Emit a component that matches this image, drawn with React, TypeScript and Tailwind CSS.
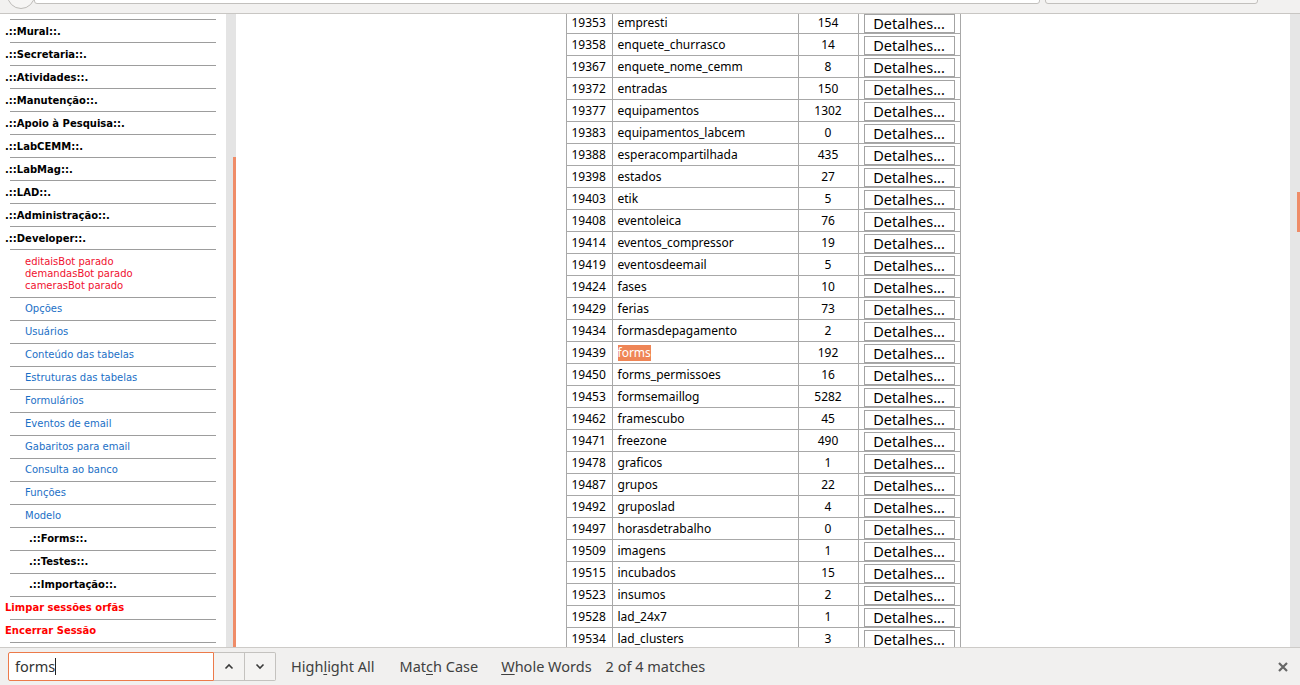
import React from 'react';

const rows: [string, string, string][] = [
  ['19353', 'empresti', '154'],
  ['19358', 'enquete_churrasco', '14'],
  ['19367', 'enquete_nome_cemm', '8'],
  ['19372', 'entradas', '150'],
  ['19377', 'equipamentos', '1302'],
  ['19383', 'equipamentos_labcem', '0'],
  ['19388', 'esperacompartilhada', '435'],
  ['19398', 'estados', '27'],
  ['19403', 'etik', '5'],
  ['19408', 'eventoleica', '76'],
  ['19414', 'eventos_compressor', '19'],
  ['19419', 'eventosdeemail', '5'],
  ['19424', 'fases', '10'],
  ['19429', 'ferias', '73'],
  ['19434', 'formasdepagamento', '2'],
  ['19439', 'forms', '192'],
  ['19450', 'forms_permissoes', '16'],
  ['19453', 'formsemaillog', '5282'],
  ['19462', 'framescubo', '45'],
  ['19471', 'freezone', '490'],
  ['19478', 'graficos', '1'],
  ['19487', 'grupos', '22'],
  ['19492', 'gruposlad', '4'],
  ['19497', 'horasdetrabalho', '0'],
  ['19509', 'imagens', '1'],
  ['19515', 'incubados', '15'],
  ['19523', 'insumos', '2'],
  ['19528', 'lad_24x7', '1'],
  ['19534', 'lad_clusters', '3'],
];

const topMenus = [
  '.::Mural::.',
  '.::Secretaria::.',
  '.::Atividades::.',
  '.::Manutenção::.',
  '.::Apoio à Pesquisa::.',
  '.::LabCEMM::.',
  '.::LabMag::.',
  '.::LAD::.',
  '.::Administração::.',
  '.::Developer::.',
];

const devLinks = [
  'Opções',
  'Usuários',
  'Conteúdo das tabelas',
  'Estruturas das tabelas',
  'Formulários',
  'Eventos de email',
  'Gabaritos para email',
  'Consulta ao banco',
  'Funções',
  'Modelo',
];

const subMenus = ['.::Forms::.', '.::Testes::.', '.::Importação::.'];

function Line() {
  return <div className="ml-[10px] w-[206px] h-px bg-[#9d9d9d]" />;
}

function Sidebar() {
  return (
    <div className="w-[226px] shrink-0 pt-[5px] text-[10px] font-['DejaVu_Sans',Verdana,sans-serif]">
      {topMenus.map((m) => (
        <div key={m}>
          <Line />
          <div className="h-[22px] flex items-center pl-[5px] font-bold text-black">{m}</div>
        </div>
      ))}
      <Line />
      <div className="pl-[25px] pt-[6px] pb-[4.5px] leading-[12px] text-[#f0112f]">
        <div>editaisBot parado</div>
        <div>demandasBot parado</div>
        <div>camerasBot parado</div>
      </div>
      {devLinks.map((l) => (
        <div key={l}>
          <Line />
          <div className="h-[22px] flex items-center pl-[25px] text-[#1b6fc6]">{l}</div>
        </div>
      ))}
      {subMenus.map((m) => (
        <div key={m}>
          <Line />
          <div className="h-[22px] flex items-center pl-[29px] font-bold text-black">{m}</div>
        </div>
      ))}
      <Line />
      <div className="h-[22px] flex items-center pl-[5px] font-bold text-[#ff0000]">Limpar sessões orfãs</div>
      <Line />
      <div className="h-[22px] flex items-center pl-[5px] font-bold text-[#ff0000]">Encerrar Sessão</div>
      <Line />
    </div>
  );
}

function TableView() {
  return (
    <table className="mx-auto mt-[-3px] table-fixed w-[394px] border-collapse font-['Noto_Sans',sans-serif] text-[12px] text-black">
      <colgroup>
        <col className="w-[46px]" />
        <col className="w-[186px]" />
        <col className="w-[60px]" />
        <col className="w-[102px]" />
      </colgroup>
      <tbody>
        {rows.map(([id, name, count]) => (
          <tr key={id}>
            <td className="border border-[#a8a8a8] h-[22px] px-[5px] leading-[21px] whitespace-nowrap">{id}</td>
            <td className="border border-[#a8a8a8] h-[22px] px-[5px] leading-[21px] whitespace-nowrap">
              {name === 'forms' ? (
                <span className="inline-block bg-[#ef8556] text-white leading-[16px]">{name}</span>
              ) : (
                name
              )}
            </td>
            <td className="border border-[#a8a8a8] h-[22px] text-center leading-[21px]">{count}</td>
            <td className="border border-[#a8a8a8] h-[22px] pl-[5px] pr-0 py-0 align-bottom">
              <div className="w-[91px] h-[19px] border border-[#a3a3a3] bg-white flex items-center justify-center text-[14.5px] leading-none text-black">
                Detalhes...
              </div>
            </td>
          </tr>
        ))}
      </tbody>
    </table>
  );
}

function FindBar() {
  return (
    <div className="h-[38px] shrink-0 bg-[#f1f0ef] border-t border-[#cdcbc8] flex items-center font-['Noto_Sans',sans-serif] text-[14.5px] text-[#404040]">
      <div className="ml-[8px] flex items-center h-[29px]">
        <div className="w-[206px] h-[29px] border border-[#ec7a4a] bg-white rounded-l-[2px] flex items-center pl-[6px] text-[#333]">
          forms<span className="inline-block w-px h-[17px] bg-[#222]" />
        </div>
        <div className="w-[31px] h-[29px] border-y border-r border-[#c4c2bf] bg-[#f4f3f2] flex items-center justify-center">
          <svg width="10" height="7" viewBox="0 0 10 7">
            <path d="M1.5 5.5 L5 2 L8.5 5.5" fill="none" stroke="#3a3a3a" strokeWidth="1.6" />
          </svg>
        </div>
        <div className="w-[31px] h-[29px] border-y border-r border-[#c4c2bf] bg-[#f4f3f2] rounded-r-[2px] flex items-center justify-center">
          <svg width="10" height="7" viewBox="0 0 10 7">
            <path d="M1.5 1.5 L5 5 L8.5 1.5" fill="none" stroke="#3a3a3a" strokeWidth="1.6" />
          </svg>
        </div>
      </div>
      <span className="ml-[15px]">
        High<span className="underline underline-offset-2">l</span>ight All
      </span>
      <span className="ml-[25px]">
        Mat<span className="underline underline-offset-2">c</span>h Case
      </span>
      <span className="ml-[23px]">
        <span className="underline underline-offset-2">W</span>hole Words
      </span>
      <span className="ml-[14px]">2 of 4 matches</span>
      <div className="ml-auto mr-[12px] flex items-center">
        <svg width="10" height="10" viewBox="0 0 10 10">
          <path d="M1 1 L9 9 M9 1 L1 9" stroke="#666" strokeWidth="2.2" />
        </svg>
      </div>
    </div>
  );
}

export default function App() {
  return (
    <div className="w-[1300px] h-[685px] flex flex-col bg-white overflow-hidden">
      <div className="h-[14px] shrink-0 bg-[#f2f1f0] border-b border-[#c8c6c3] flex overflow-hidden">
        <div className="ml-[7px] mt-[-19px] w-[28px] h-[28px] rounded-full border border-[#bdbbb8] bg-[#f6f5f4]" />
        <div className="ml-[-1px] mt-[-10px] w-[1006px] h-[14px] border border-[#c2c0bd] bg-white rounded-b-[3px]" />
        <div className="ml-[5px] mt-[-10px] w-[213px] h-[14px] border border-[#c2c0bd] bg-[#f7f6f5] rounded-b-[3px]" />
      </div>
      <div className="flex-1 flex overflow-hidden">
        <Sidebar />
        <div className="w-[10px] shrink-0 bg-[#e4e4e4] flex justify-end">
          <div className="w-[3px] mt-[143px] h-[600px] bg-[#ef8c68]" />
        </div>
        <div className="flex-1 overflow-hidden">
          <TableView />
        </div>
        <div className="w-[10px] shrink-0 bg-[#e6e6e6] flex justify-end">
          <div className="w-[3px] mt-[178px] h-[40px] bg-[#ef8c68]" />
        </div>
      </div>
      <FindBar />
    </div>
  );
}
